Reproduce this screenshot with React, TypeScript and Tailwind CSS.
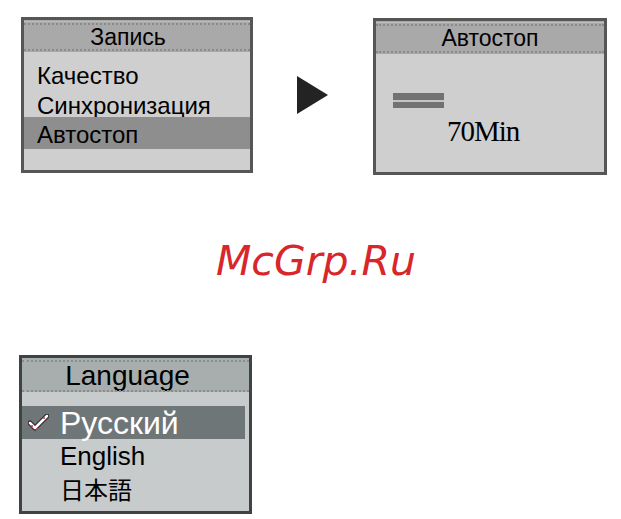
import React from "react";

const sans = "font-['Liberation_Sans',Arial,sans-serif]";

function Header({ title, tone, h, text, shift }: { title: string; tone: "gray" | "blue"; h: string; text: string; shift: string }) {
  const bg = tone === "gray" ? "bg-[#a9a9a9]" : "bg-[#a8adad]";
  const dot = tone === "gray" ? "border-[#8a8a8a]" : "border-[#878d8d]";
  return (
    <div className={`${bg} ${h} flex flex-col`}>
      <div className="h-px bg-[#bdbdbd] mt-[1px]" />
      <div className={`border-t-2 border-dotted ${dot} mt-px`} />
      <div className={`flex-1 flex items-center justify-center text-black ${sans} ${text} ${shift} leading-none`}>{title}</div>
      <div className={`border-t-2 border-dotted ${dot} mb-px`} />
    </div>
  );
}

export default function App() {
  return (
    <div className="w-[621px] h-[519px] bg-white relative overflow-hidden">
      <div className="flex items-start pl-[21px] pt-[17px]">
        {/* Box 1 */}
        <div className="w-[232px] h-[156px] border-[3px] border-[#565656] bg-[#cfcfcf] flex flex-col">
          <Header title="Запись" tone="gray" h="h-[32px]" text="text-[23px]" shift="pr-[18px]" />
          <div className={`flex flex-col pt-[9px] ${sans} text-[24px] text-black`}>
            <div className="h-[30px] flex items-center pl-[13px]">Качество</div>
            <div className="h-[26px] flex items-center pl-[13px] pt-[4px]">Синхронизация</div>
            <div className="h-[32px] flex items-center pl-[13px] pt-[3px] bg-[#8e8e8e]">Автостоп</div>
          </div>
        </div>
        {/* Arrow */}
        <svg className="ml-[44px] mt-[59px]" width="31" height="38" viewBox="0 0 31 38">
          <polygon points="0,0 31,19 0,38" fill="#232323" />
        </svg>
        {/* Box 2 */}
        <div className="ml-[45px] mt-[1px] w-[234px] h-[157px] border-[3px] border-[#565656] bg-[#cfcfcf] flex flex-col">
          <Header title="Автостоп" tone="gray" h="h-[33px]" text="text-[23px]" shift="" />
          <div className="flex flex-col pl-[17px] pt-[39px]">
            <div className="w-[51px] h-[15px] bg-[#727272] flex flex-col justify-center">
              <div className="h-[2px] bg-[#c4c4c4]" />
            </div>
            <div className="pl-[54px] mt-[9px] font-['Liberation_Serif','Times_New_Roman',serif] text-[29px] leading-none text-black tracking-[-1px]">
              70Min
            </div>
          </div>
        </div>
      </div>

      <div className="pl-[216px] pt-[66px] font-['DejaVu_Sans',sans-serif] italic text-[41px] leading-none text-[#d8262a]">
        McGrp.Ru
      </div>

      {/* Box 3 */}
      <div className="ml-[19px] mt-[73px] w-[233px] h-[159px] border-[3px] border-[#3e4444] bg-[#c7cbcb] flex flex-col">
        <Header title="Language" tone="blue" h="h-[34px]" text="text-[28px]" shift="pr-[16px]" />
        <div className={`flex flex-col pt-[14px] ${sans}`}>
          <div className="h-[33px] mr-[4px] bg-[#6f7677] flex items-center">
            <svg className="ml-[6px]" width="21" height="17" viewBox="0 0 21 17">
              <path d="M2 9 L7 14 L19 2" fill="none" stroke="#3a2a2e" strokeWidth="5" strokeLinecap="round" strokeLinejoin="round" />
              <path d="M2 9 L7 14 L19 2" fill="none" stroke="#ffffff" strokeWidth="2.5" strokeLinecap="round" strokeLinejoin="round" />
              <circle cx="4" cy="12" r="1.1" fill="#d04060" />
              <circle cx="9" cy="15" r="1.1" fill="#d04060" />
              <circle cx="16" cy="4" r="1.1" fill="#d04060" />
            </svg>
            <span className="ml-[11px] text-[32px] leading-none text-white">Русский</span>
          </div>
          <div className="h-[33px] flex items-center pl-[38px] text-[26px] leading-none text-black">English</div>
          <div className="h-[33px] flex items-center pl-[38px] text-[24px] leading-none text-black font-['Noto_Sans_CJK_JP',sans-serif]">日本語</div>
        </div>
      </div>
    </div>
  );
}
